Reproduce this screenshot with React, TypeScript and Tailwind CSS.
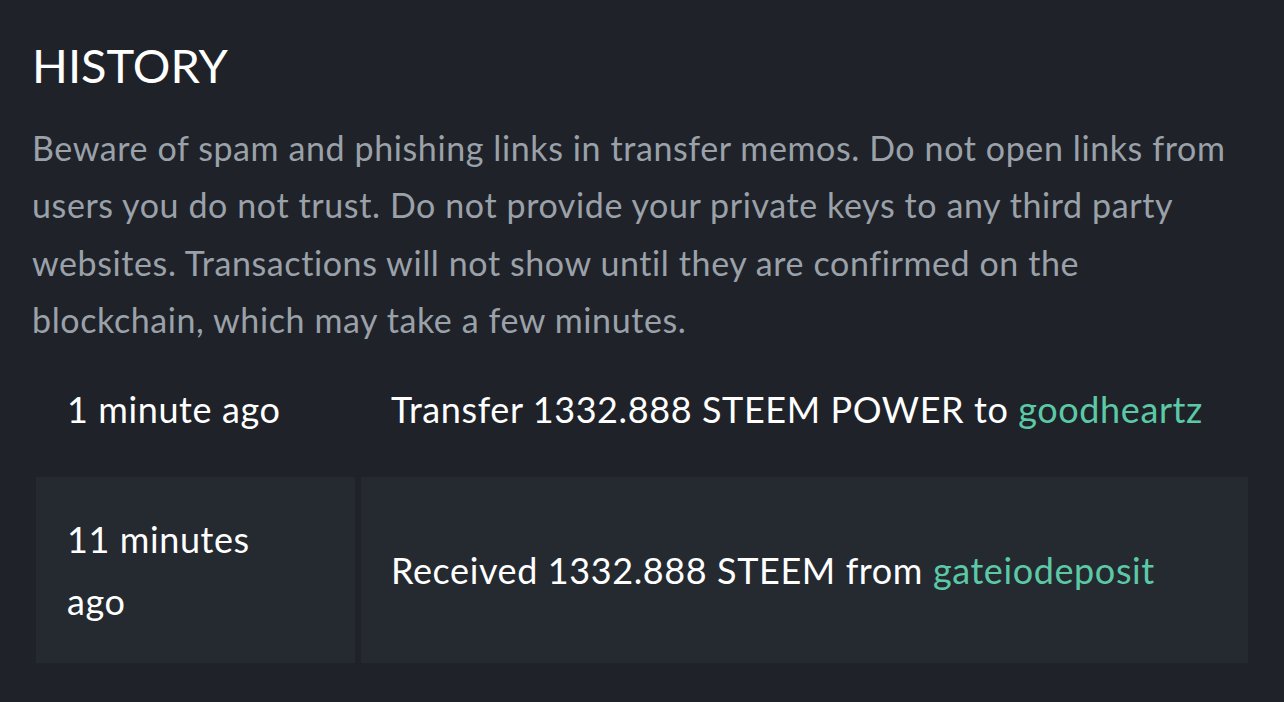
export default function App() {
  const rows = [
    { time: "1 minute ago", text: "Transfer 1332.888 STEEM POWER to ", user: "goodheartz" },
    { time: "11 minutes ago", text: "Received 1332.888 STEEM from ", user: "gateiodeposit" },
  ]

  return (
    <div className="min-h-[702px] w-full bg-[#1f2329] px-[32px] pt-[33px] text-white" style={{ fontFamily: "Lato, 'Open Sans', sans-serif" }}>
      <h2 className="text-[47px] leading-[64px] font-normal">HISTORY</h2>
      <p className="mt-[22px] text-[34px] leading-[57.3px] tracking-[0.6px] text-[#9ba1a9]">
        Beware of spam and phishing links in transfer memos. Do not open links from users you do not trust. Do not
        provide your private keys to any third party websites. Transactions will not show until they are confirmed on
        the blockchain, which may take a few minutes.
      </p>

      <table className="mt-[-7px] ml-[-2px] w-[1224px] table-fixed border-separate border-spacing-[6px] text-[36px] leading-[62px] tracking-[0.6px]">
        <tbody>
          {rows.map((row, i) => (
            <tr key={row.time} className={i % 2 === 1 ? "bg-[#252a31]" : ""}>
              <td className="w-[319px] pl-[31px] pr-[50px] py-[31px] align-middle">{row.time}</td>
              <td className="px-[30px] py-[31px] align-middle">
                {row.text}
                <span className="text-[#5cc9a6]">{row.user}</span>
              </td>
            </tr>
          ))}
        </tbody>
      </table>
    </div>
  )
}
